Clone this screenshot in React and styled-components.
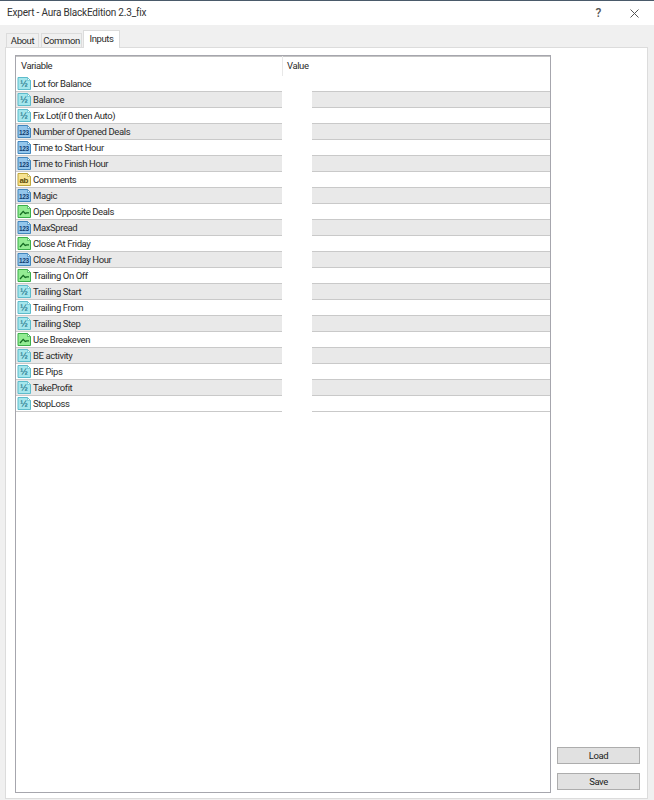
import styled, { createGlobalStyle } from 'styled-components';

const rows = [
  ['Lot for Balance', 'real'],
  ['Balance', 'real'],
  ['Fix Lot(if 0 then Auto)', 'real'],
  ['Number of Opened Deals', 'int'],
  ['Time to Start Hour', 'int'],
  ['Time to Finish Hour', 'int'],
  ['Comments', 'text'],
  ['Magic', 'int'],
  ['Open Opposite Deals', 'bool'],
  ['MaxSpread', 'int'],
  ['Close At Friday', 'bool'],
  ['Close At Friday Hour', 'int'],
  ['Trailing On Off', 'bool'],
  ['Trailing Start', 'real'],
  ['Trailing From', 'real'],
  ['Trailing Step', 'real'],
  ['Use Breakeven', 'bool'],
  ['BE activity', 'real'],
  ['BE Pips', 'real'],
  ['TakeProfit', 'real'],
  ['StopLoss', 'real'],
];

const iconColors = {
  real: { fill: '#a5e6ec', stroke: '#5dbccb', label: '½', ink: '#2a7f92', size: 9.5 },
  int: { fill: '#93c6ec', stroke: '#4186bd', label: '123', ink: '#143f72', size: 6.5 },
  text: { fill: '#f7e391', stroke: '#bfa63a', label: 'ab', ink: '#5a4a08', size: 8 },
  bool: { fill: '#93ec93', stroke: '#3bae4a', label: '', ink: '#136b22', size: 0 },
};

function TypeIcon({ type }) {
  const c = iconColors[type];
  return (
    <svg width="15" height="15" viewBox="0 0 15 15">
      <path
        d="M1 1.5h9.5l3 3v9H1z"
        fill={c.fill}
        stroke={c.stroke}
        strokeLinejoin="round"
      />
      <path d="M10.5 1.5v3h3z" fill="#f0fcfc" stroke={c.stroke} strokeWidth="0.7" />
      {type === 'bool' ? (
        <path d="M3 11l3.2-3.6 2 2 1.6-.6h2.2" fill="none" stroke={c.ink} strokeWidth="1.3" />
      ) : (
        <text
          x="6.8"
          y={type === 'real' ? 10.5 : 10.5}
          textAnchor="middle"
          fontSize={c.size}
          fontWeight="700"
          fontFamily="Liberation Sans, sans-serif"
          fill={c.ink}
        >
          {c.label}
        </text>
      )}
    </svg>
  );
}

export default function App() {
  return (
    <>
      <GlobalStyle />
      <Window>
        <TitleBar>
          <Title>Expert - Aura BlackEdition 2.3_fix</Title>
          <TitleButtons>
            <Help>?</Help>
            <svg width="9" height="9" viewBox="0 0 9 9">
              <path d="M0.5 0.5l8 8M8.5 0.5l-8 8" stroke="#555" strokeWidth="1" fill="none" />
            </svg>
          </TitleButtons>
        </TitleBar>
        <Body>
          <Tabs>
            <Tab $w={33}>About</Tab>
            <Tab $w={41}>Common</Tab>
            <Tab $w={37} $active>Inputs</Tab>
          </Tabs>
          <Panel>
            <ListBox>
              <Header>
                <HeaderCell $w={267}>Variable</HeaderCell>
                <HeaderCell>Value</HeaderCell>
              </Header>
              {rows.map(([name, type], i) => (
                <Row key={name}>
                  <NameCell $odd={i % 2 === 1}>
                    <TypeIcon type={type} />
                    <span>{name}</span>
                  </NameCell>
                  <Spacer />
                  <ValueCell $odd={i % 2 === 1} />
                </Row>
              ))}
            </ListBox>
            <Side>
              <SideButton>Load</SideButton>
              <SideButton>Save</SideButton>
            </Side>
          </Panel>
        </Body>
      </Window>
    </>
  );
}

const GlobalStyle = createGlobalStyle`
  html, body {
    margin: 0;
    padding: 0;
    background: #f0f0f0;
  }
`;

const Window = styled.div`
  width: 654px;
  height: 800px;
  overflow: hidden;
  display: flex;
  flex-direction: column;
  border-top: 1px solid #4a5a6a;
  box-sizing: border-box;
  font-family: Roboto, "Liberation Sans", sans-serif;
  font-size: 9.5px;
  letter-spacing: -0.4px;
  color: #2b2b2b;
`;

const TitleBar = styled.div`
  height: 24px;
  flex: none;
  background: #fff;
  display: flex;
  align-items: center;
  justify-content: space-between;
  padding: 0 15px 0 7px;
`;

const Title = styled.div`
  font-size: 10px;
  letter-spacing: -0.2px;
  color: #333;
  padding-bottom: 2px;
`;

const TitleButtons = styled.div`
  display: flex;
  align-items: center;
  gap: 29px;
`;

const Help = styled.span`
  font-size: 12px;
  font-weight: 500;
  color: #555;
`;

const Body = styled.div`
  flex: 1;
  display: flex;
  flex-direction: column;
  padding: 5px 6px 1px 5px;
  min-height: 0;
`;

const Tabs = styled.div`
  display: flex;
  align-items: flex-end;
  gap: 2px;
  height: 18px;
  flex: none;
  padding-left: 1px;
  position: relative;
  z-index: 1;
  margin-bottom: -1px;
`;

const Tab = styled.div`
  width: ${(p) => p.$w}px;
  height: ${(p) => (p.$active ? 18 : 15)}px;
  box-sizing: border-box;
  display: flex;
  align-items: center;
  justify-content: center;
  padding-bottom: ${(p) => (p.$active ? 2 : 1)}px;
  background: ${(p) => (p.$active ? '#fff' : '#f0f0f0')};
  border: 1px solid #dcdcdc;
  border-bottom: ${(p) => (p.$active ? 'none' : '1px solid #dcdcdc')};
  margin-left: ${(p) => (p.$active ? -1 : 0)}px;
`;

const Panel = styled.div`
  flex: 1;
  min-height: 0;
  display: flex;
  background: #fff;
  border: 1px solid #dcdcdc;
  padding: 7px 7px 5px 9px;
`;

const ListBox = styled.div`
  width: 536px;
  flex: none;
  box-sizing: border-box;
  border: 1px solid #a6a6ad;
  border-left-width: 1.5px;
  box-shadow: inset 0 1px 0 #c4c4c4;
`;

const Header = styled.div`
  display: flex;
  height: 20px;
  align-items: center;
`;

const HeaderCell = styled.div`
  width: ${(p) => (p.$w ? `${p.$w}px` : 'auto')};
  box-sizing: border-box;
  height: 20px;
  display: flex;
  align-items: center;
  padding-left: ${(p) => (p.$w ? 5 : 4)}px;
  padding-bottom: 1px;
  border-right: ${(p) => (p.$w ? '1px solid #e8e8e8' : 'none')};
`;

const Row = styled.div`
  display: flex;
  height: 16px;
`;

const NameCell = styled.div`
  width: 266px;
  flex: none;
  box-sizing: border-box;
  display: flex;
  align-items: center;
  gap: 1px;
  padding-left: 1px;
  background: ${(p) => (p.$odd ? '#e9e9e9' : '#fff')};
  border-bottom: 1px solid #c9c9c9;
`;

const Spacer = styled.div`
  width: 30px;
  flex: none;
  background: #fff;
`;

const ValueCell = styled.div`
  flex: 1;
  background: ${(p) => (p.$odd ? '#e9e9e9' : '#fff')};
  border-bottom: 1px solid #c9c9c9;
`;

const Side = styled.div`
  flex: 1;
  display: flex;
  flex-direction: column;
  justify-content: flex-end;
  gap: 9px;
  padding: 0 0 3px 6px;
`;

const SideButton = styled.div`
  height: 17px;
  box-sizing: border-box;
  background: #e1e1e1;
  border: 1px solid #adadad;
  display: flex;
  align-items: center;
  justify-content: center;
  color: #222;
`;
